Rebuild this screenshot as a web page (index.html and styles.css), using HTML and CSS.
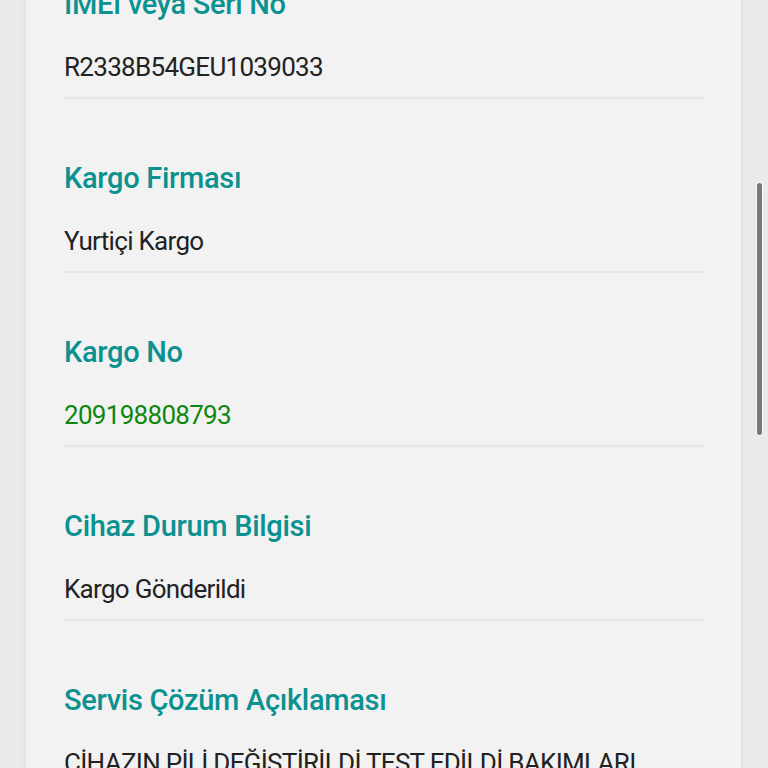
FILE: index.html
```html
<!DOCTYPE html>
<html lang="tr">
<head>
    <meta charset="UTF-8">
    <meta name="viewport" content="width=device-width, initial-scale=1.0">
    <title>Servis Durumu</title>
    <link rel="stylesheet" href="styles.css">
</head>
<body>
    <div class="page">
        <div class="card">
            <div class="item">
                <h3 class="label">IMEI veya Seri No</h3>
                <p class="value">R2338B54GEU1039033</p>
            </div>
            <div class="item">
                <h3 class="label">Kargo Firması</h3>
                <p class="value">Yurtiçi Kargo</p>
            </div>
            <div class="item">
                <h3 class="label">Kargo No</h3>
                <p class="value tracking">209198808793</p>
            </div>
            <div class="item">
                <h3 class="label">Cihaz Durum Bilgisi</h3>
                <p class="value">Kargo Gönderildi</p>
            </div>
            <div class="item last">
                <h3 class="label">Servis Çözüm Açıklaması</h3>
                <p class="value">CİHAZIN PİLİ DEĞİŞTİRİLDİ TEST EDİLDİ BAKIMLARI YAPILDI</p>
            </div>
        </div>
    </div>
    <div class="scroll-thumb"></div>
</body>
</html>
```

FILE: styles.css
```css
body {
    font-family: Roboto, "Noto Sans", sans-serif;
    background-color: #eaeaea;
    margin: 0;
    height: 100vh;
    overflow: hidden;
}

.page {
    padding: 0 27px 0 26px;
}

.card {
    background: #f2f2f2;
    margin-top: -75px;
    padding: 0 37px 0 38px;
    box-shadow: 0px 0px 6px rgba(0, 0, 0, 0.07);
}

.item {
    padding: 61px 0 14px;
    border-bottom: 2px solid #e6e6e6;
}

.item.last {
    border-bottom: none;
}

.label {
    margin: 0;
    font-size: 29px;
    line-height: 36px;
    font-weight: 500;
    letter-spacing: -0.3px;
    color: #0a9190;
}

.value {
    margin: 29px 0 0;
    font-size: 26px;
    line-height: 32px;
    letter-spacing: -0.7px;
    color: #222;
}

.tracking {
    color: #0e870e;
}

.scroll-thumb {
    position: fixed;
    top: 183px;
    right: 6px;
    width: 5px;
    height: 252px;
    background: #787878;
    border-radius: 3px;
    box-shadow: 0 0 0 1px rgba(255, 255, 255, 0.7);
}
```
